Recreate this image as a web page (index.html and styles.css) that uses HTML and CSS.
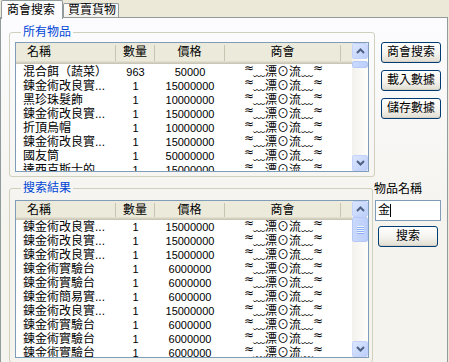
FILE: index.html
```html
<!DOCTYPE html>
<html>
<head>
<meta charset="utf-8">
<link rel="stylesheet" href="styles.css">
</head>
<body>
<div class="tabs">
  <div class="tab active">商會搜索</div>
  <div class="tab">買賣貨物</div>
</div>
<div class="panel">
  <div class="prow prow1">
    <fieldset class="grp grp1">
      <legend>所有物品</legend>
      <div class="list list1">
        <div class="lmain">
          <div class="hdr"><div class="h c1">名稱</div><div class="h c2">數量</div><div class="h c3">價格</div><div class="h c4">商會</div><div class="h c5"></div></div>
          <div class="row"><div class="c1">混合餌（蔬菜）</div><div class="c2 num">963</div><div class="c3 num">50000</div><div class="c4"><span class="sq">≈</span>﹏漂⊙流﹏<span class="sq">≈</span></div></div>
          <div class="row"><div class="c1">鍊金術改良實...</div><div class="c2 num">1</div><div class="c3 num">15000000</div><div class="c4"><span class="sq">≈</span>﹏漂⊙流﹏<span class="sq">≈</span></div></div>
          <div class="row"><div class="c1">黑珍珠髮飾</div><div class="c2 num">1</div><div class="c3 num">10000000</div><div class="c4"><span class="sq">≈</span>﹏漂⊙流﹏<span class="sq">≈</span></div></div>
          <div class="row"><div class="c1">鍊金術改良實...</div><div class="c2 num">1</div><div class="c3 num">15000000</div><div class="c4"><span class="sq">≈</span>﹏漂⊙流﹏<span class="sq">≈</span></div></div>
          <div class="row"><div class="c1">折頂烏帽</div><div class="c2 num">1</div><div class="c3 num">10000000</div><div class="c4"><span class="sq">≈</span>﹏漂⊙流﹏<span class="sq">≈</span></div></div>
          <div class="row"><div class="c1">鍊金術改良實...</div><div class="c2 num">1</div><div class="c3 num">15000000</div><div class="c4"><span class="sq">≈</span>﹏漂⊙流﹏<span class="sq">≈</span></div></div>
          <div class="row"><div class="c1">國友筒</div><div class="c2 num">1</div><div class="c3 num">50000000</div><div class="c4"><span class="sq">≈</span>﹏漂⊙流﹏<span class="sq">≈</span></div></div>
          <div class="row"><div class="c1">達西克斯士的</div><div class="c2 num">1</div><div class="c3 num">15000000</div><div class="c4"><span class="sq">≈</span>﹏漂⊙流﹏<span class="sq">≈</span></div></div>
        </div>
        <div class="sbar">
          <div class="arr"><svg width="9" height="6" viewBox="0 0 9 6"><path d="M1 5 L4.5 1.5 L8 5" fill="none" stroke="#4d6185" stroke-width="2"/></svg></div>
          <div class="thumb thumb1"></div>
          <div class="track"></div>
          <div class="arr"><svg width="9" height="6" viewBox="0 0 9 6"><path d="M1 1 L4.5 4.5 L8 1" fill="none" stroke="#4d6185" stroke-width="2"/></svg></div>
        </div>
      </div>
    </fieldset>
    <div class="side1">
      <div class="btn">商會搜索</div>
      <div class="btn">載入數據</div>
      <div class="btn">儲存數據</div>
    </div>
  </div>
  <div class="prow prow2">
    <fieldset class="grp grp2">
      <legend>搜索結果</legend>
      <div class="list list2">
        <div class="lmain">
          <div class="hdr"><div class="h c1">名稱</div><div class="h c2">數量</div><div class="h c3">價格</div><div class="h c4">商會</div><div class="h c5"></div></div>
          <div class="row"><div class="c1">鍊金術改良實...</div><div class="c2 num">1</div><div class="c3 num">15000000</div><div class="c4"><span class="sq">≈</span>﹏漂⊙流﹏<span class="sq">≈</span></div></div>
          <div class="row"><div class="c1">鍊金術改良實...</div><div class="c2 num">1</div><div class="c3 num">15000000</div><div class="c4"><span class="sq">≈</span>﹏漂⊙流﹏<span class="sq">≈</span></div></div>
          <div class="row"><div class="c1">鍊金術改良實...</div><div class="c2 num">1</div><div class="c3 num">15000000</div><div class="c4"><span class="sq">≈</span>﹏漂⊙流﹏<span class="sq">≈</span></div></div>
          <div class="row"><div class="c1">鍊金術實驗台</div><div class="c2 num">1</div><div class="c3 num">6000000</div><div class="c4"><span class="sq">≈</span>﹏漂⊙流﹏<span class="sq">≈</span></div></div>
          <div class="row"><div class="c1">鍊金術實驗台</div><div class="c2 num">1</div><div class="c3 num">6000000</div><div class="c4"><span class="sq">≈</span>﹏漂⊙流﹏<span class="sq">≈</span></div></div>
          <div class="row"><div class="c1">鍊金術簡易實...</div><div class="c2 num">1</div><div class="c3 num">6000000</div><div class="c4"><span class="sq">≈</span>﹏漂⊙流﹏<span class="sq">≈</span></div></div>
          <div class="row"><div class="c1">鍊金術改良實...</div><div class="c2 num">1</div><div class="c3 num">15000000</div><div class="c4"><span class="sq">≈</span>﹏漂⊙流﹏<span class="sq">≈</span></div></div>
          <div class="row"><div class="c1">鍊金術實驗台</div><div class="c2 num">1</div><div class="c3 num">6000000</div><div class="c4"><span class="sq">≈</span>﹏漂⊙流﹏<span class="sq">≈</span></div></div>
          <div class="row"><div class="c1">鍊金術實驗台</div><div class="c2 num">1</div><div class="c3 num">6000000</div><div class="c4"><span class="sq">≈</span>﹏漂⊙流﹏<span class="sq">≈</span></div></div>
          <div class="row"><div class="c1">鍊金術實驗台</div><div class="c2 num">1</div><div class="c3 num">6000000</div><div class="c4"><span class="sq">≈</span>﹏漂⊙流﹏<span class="sq">≈</span></div></div>
        </div>
        <div class="sbar">
          <div class="arr"><svg width="9" height="6" viewBox="0 0 9 6"><path d="M1 5 L4.5 1.5 L8 5" fill="none" stroke="#4d6185" stroke-width="2"/></svg></div>
          <div class="thumb thumb2"><span></span><span></span><span></span><span></span></div>
          <div class="track"></div>
          <div class="arr"><svg width="9" height="6" viewBox="0 0 9 6"><path d="M1 1 L4.5 4.5 L8 1" fill="none" stroke="#4d6185" stroke-width="2"/></svg></div>
        </div>
      </div>
    </fieldset>
    <div class="side2">
      <div class="lbl">物品名稱</div>
      <div class="tbox">金<span class="caret"></span></div>
      <div class="btn btn-search">搜索</div>
    </div>
  </div>
</div>
</body>
</html>
```

FILE: styles.css
```css
* { box-sizing: border-box; }
html, body { margin: 0; padding: 0; }
body {
  width: 449px;
  height: 362px;
  overflow: hidden;
  background: #ece9d8;
  font-family: "Liberation Sans", "Noto Sans CJK TC", sans-serif;
  font-size: 12px;
  color: #000;
}
.tabs {
  display: flex;
  align-items: flex-end;
  height: 17px;
  padding-left: 1px;
}
.tab {
  height: 14px;
  border: 1px solid #919b9c;
  border-bottom: none;
  border-radius: 2px 2px 0 0;
  background: linear-gradient(#fefefe, #f2f1ec);
  font-size: 12px;
  line-height: 13px;
  padding: 0 2px 0 4px;
  white-space: nowrap;
}
.tab.active {
  height: 19px;
  margin-bottom: -2px;
  position: relative;
  z-index: 1;
  background: #fcfcfe;
  padding: 3px 7px 0 5px;
}
.panel {
  width: 448px;
  height: 352px;
  border: 1px solid #919b9c;
  background: linear-gradient(#fcfcfe, #f4f3ee 60%);
  padding: 8px 0 0 8px;
  display: flex;
  flex-direction: column;
}
.prow { display: flex; }
.grp {
  margin: 0;
  padding: 0 5px 4px 5px;
  border: 1px solid #d0d0bf;
  border-radius: 3px;
  min-inline-size: 0;
}
.grp legend {
  color: #0046d5;
  font-size: 12px;
  line-height: 12px;
  padding: 0 2px;
  margin-left: 6px;
}
.grp1 { width: 366px; }
.grp2 { width: 364px; margin-top: 5px; }
.list {
  display: flex;
  border: 1px solid #7f9db9;
  background: #fff;
  width: 354px;
  overflow: hidden;
}
.list1 { height: 130px; margin-top: 4px; }
.list2 { height: 158px; margin-top: 6px; }
.lmain { flex: 1; overflow: hidden; }
.hdr, .row {
  display: grid;
  grid-template-columns: 100px 39px 70px 116px 1fr;
}
.hdr {
  height: 19px;
  background: #ebeadb;
  box-shadow: inset 0 -1px #cbc7b8, inset 0 -2px #d6d2c2, inset 0 -3px #e2decd;
}
.list1 .hdr { height: 21px; margin-bottom: 1px; }
.h {
  font-size: 12px;
  text-align: center;
  border-right: 1px solid #c7c5b2;
  margin: 2px 0 3px;
  line-height: 14px;
}
.h.c1 { text-align: left; padding-left: 11px; }
.h.c5 { border-right: none; }
.row {
  height: 14px;
  line-height: 14px;
  white-space: nowrap;
}
.row .c1 { padding-left: 7px; overflow: hidden; }
.row .c2, .row .c3, .row .c4 { text-align: center; }
.num { font-size: 11px; color: #000; }
.sq {
  font-family: "DejaVu Sans", sans-serif;
  font-size: 12px;
  line-height: 0;
  vertical-align: 4px;
  letter-spacing: -1px;
}
.sbar {
  width: 16px;
  display: flex;
  flex-direction: column;
  background: linear-gradient(90deg, #f3f1ec, #fefefb);
}
.arr {
  height: 16px;
  border: 1px solid #c3d3fd;
  border-radius: 2px;
  background: linear-gradient(135deg, #dce6fe, #bccffa);
  display: flex;
  align-items: center;
  justify-content: center;
}
.track { flex: 1; }
.thumb {
  border: 1px solid #b5c9f6;
  border-radius: 2px;
  background: linear-gradient(90deg, #cad9fd, #bccffa);
}
.thumb1 { height: 7px; margin-top: 2px; }
.thumb2 {
  height: 25px;
  display: flex;
  flex-direction: column;
  align-items: center;
  justify-content: center;
  gap: 1px;
}
.thumb2 span {
  width: 7px;
  height: 1px;
  background: #eef3fe;
  box-shadow: 0 1px #8cb0f8;
}
.btn {
  width: 60px;
  height: 21px;
  border: 1px solid #003c74;
  border-radius: 3px;
  background: linear-gradient(#ffffff, #f4f3ee 55%, #e0ddd0);
  box-shadow: inset 0 -1px #d6d0c5;
  text-align: center;
  font-size: 12px;
  line-height: 19px;
}
.side1 {
  display: flex;
  flex-direction: column;
  gap: 7px;
  margin-left: 6px;
  padding-top: 16px;
}
.side2 {
  display: flex;
  flex-direction: column;
  margin-left: 1px;
  padding-top: 6px;
}
.lbl { font-size: 12px; line-height: 13px; }
.tbox {
  margin-top: 4px;
  margin-left: 1px;
  width: 66px;
  height: 21px;
  border: 1px solid #7f9db9;
  background: #fff;
  line-height: 19px;
  padding-left: 2px;
  display: flex;
  align-items: center;
}
.caret {
  display: inline-block;
  width: 1px;
  height: 13px;
  background: #000;
}
.btn-search { margin-top: 5px; margin-left: 4px; }
```
